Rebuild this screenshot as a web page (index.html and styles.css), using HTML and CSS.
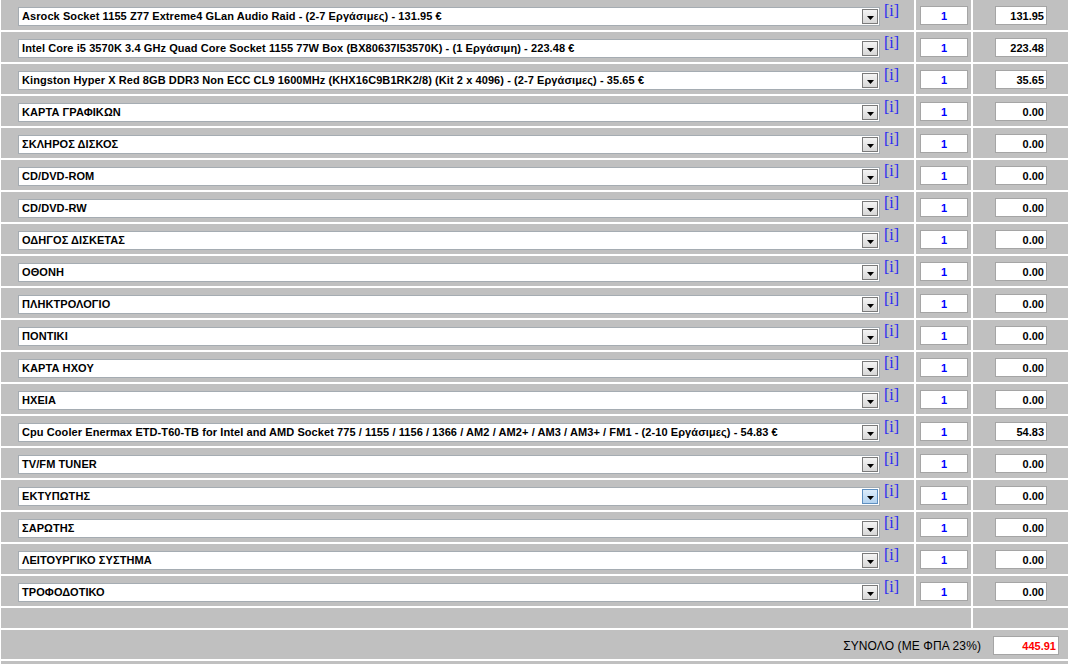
FILE: index.html
```html
<!DOCTYPE html>
<html lang="el">
<head>
    <meta charset="UTF-8">
    <title>Σύνθεση υπολογιστή</title>
    <link rel="stylesheet" href="styles.css">
</head>
<body>

    <table class="builder">
        <colgroup>
            <col class="col-item">
            <col class="col-qty">
            <col class="col-price">
        </colgroup>
        <tbody>
            <tr class="part">
                <td><div class="pick"><div class="combo"><span class="combo-text">Asrock Socket 1155 Z77 Extreme4 GLan Audio Raid - (2-7 Εργάσιμες) - 131.95 €</span><span class="combo-btn"><svg width="7" height="4" viewBox="0 0 7 4"><path d="M0 0h7L3.5 4z"/></svg></span></div><a href="#" class="info">[i]</a></div></td>
                <td><input class="qty" type="text" value="1"></td>
                <td><input class="price" type="text" value="131.95"></td>
            </tr>
            <tr class="part">
                <td><div class="pick"><div class="combo"><span class="combo-text">Intel Core i5 3570K 3.4 GHz Quad Core Socket 1155 77W Box (BX80637I53570K) - (1 Εργάσιμη) - 223.48 €</span><span class="combo-btn"><svg width="7" height="4" viewBox="0 0 7 4"><path d="M0 0h7L3.5 4z"/></svg></span></div><a href="#" class="info">[i]</a></div></td>
                <td><input class="qty" type="text" value="1"></td>
                <td><input class="price" type="text" value="223.48"></td>
            </tr>
            <tr class="part">
                <td><div class="pick"><div class="combo"><span class="combo-text">Kingston Hyper X Red 8GB DDR3 Non ECC CL9 1600MHz (KHX16C9B1RK2/8) (Kit 2 x 4096) - (2-7 Εργάσιμες) - 35.65 €</span><span class="combo-btn"><svg width="7" height="4" viewBox="0 0 7 4"><path d="M0 0h7L3.5 4z"/></svg></span></div><a href="#" class="info">[i]</a></div></td>
                <td><input class="qty" type="text" value="1"></td>
                <td><input class="price" type="text" value="35.65"></td>
            </tr>
            <tr class="part">
                <td><div class="pick"><div class="combo"><span class="combo-text">ΚΑΡΤΑ ΓΡΑΦΙΚΩΝ</span><span class="combo-btn"><svg width="7" height="4" viewBox="0 0 7 4"><path d="M0 0h7L3.5 4z"/></svg></span></div><a href="#" class="info">[i]</a></div></td>
                <td><input class="qty" type="text" value="1"></td>
                <td><input class="price" type="text" value="0.00"></td>
            </tr>
            <tr class="part">
                <td><div class="pick"><div class="combo"><span class="combo-text">ΣΚΛΗΡΟΣ ΔΙΣΚΟΣ</span><span class="combo-btn"><svg width="7" height="4" viewBox="0 0 7 4"><path d="M0 0h7L3.5 4z"/></svg></span></div><a href="#" class="info">[i]</a></div></td>
                <td><input class="qty" type="text" value="1"></td>
                <td><input class="price" type="text" value="0.00"></td>
            </tr>
            <tr class="part">
                <td><div class="pick"><div class="combo"><span class="combo-text">CD/DVD-ROM</span><span class="combo-btn"><svg width="7" height="4" viewBox="0 0 7 4"><path d="M0 0h7L3.5 4z"/></svg></span></div><a href="#" class="info">[i]</a></div></td>
                <td><input class="qty" type="text" value="1"></td>
                <td><input class="price" type="text" value="0.00"></td>
            </tr>
            <tr class="part">
                <td><div class="pick"><div class="combo"><span class="combo-text">CD/DVD-RW</span><span class="combo-btn"><svg width="7" height="4" viewBox="0 0 7 4"><path d="M0 0h7L3.5 4z"/></svg></span></div><a href="#" class="info">[i]</a></div></td>
                <td><input class="qty" type="text" value="1"></td>
                <td><input class="price" type="text" value="0.00"></td>
            </tr>
            <tr class="part">
                <td><div class="pick"><div class="combo"><span class="combo-text">ΟΔΗΓΟΣ ΔΙΣΚΕΤΑΣ</span><span class="combo-btn"><svg width="7" height="4" viewBox="0 0 7 4"><path d="M0 0h7L3.5 4z"/></svg></span></div><a href="#" class="info">[i]</a></div></td>
                <td><input class="qty" type="text" value="1"></td>
                <td><input class="price" type="text" value="0.00"></td>
            </tr>
            <tr class="part">
                <td><div class="pick"><div class="combo"><span class="combo-text">ΟΘΟΝΗ</span><span class="combo-btn"><svg width="7" height="4" viewBox="0 0 7 4"><path d="M0 0h7L3.5 4z"/></svg></span></div><a href="#" class="info">[i]</a></div></td>
                <td><input class="qty" type="text" value="1"></td>
                <td><input class="price" type="text" value="0.00"></td>
            </tr>
            <tr class="part">
                <td><div class="pick"><div class="combo"><span class="combo-text">ΠΛΗΚΤΡΟΛΟΓΙΟ</span><span class="combo-btn"><svg width="7" height="4" viewBox="0 0 7 4"><path d="M0 0h7L3.5 4z"/></svg></span></div><a href="#" class="info">[i]</a></div></td>
                <td><input class="qty" type="text" value="1"></td>
                <td><input class="price" type="text" value="0.00"></td>
            </tr>
            <tr class="part">
                <td><div class="pick"><div class="combo"><span class="combo-text">ΠΟΝΤΙΚΙ</span><span class="combo-btn"><svg width="7" height="4" viewBox="0 0 7 4"><path d="M0 0h7L3.5 4z"/></svg></span></div><a href="#" class="info">[i]</a></div></td>
                <td><input class="qty" type="text" value="1"></td>
                <td><input class="price" type="text" value="0.00"></td>
            </tr>
            <tr class="part">
                <td><div class="pick"><div class="combo"><span class="combo-text">ΚΑΡΤΑ ΗΧΟΥ</span><span class="combo-btn"><svg width="7" height="4" viewBox="0 0 7 4"><path d="M0 0h7L3.5 4z"/></svg></span></div><a href="#" class="info">[i]</a></div></td>
                <td><input class="qty" type="text" value="1"></td>
                <td><input class="price" type="text" value="0.00"></td>
            </tr>
            <tr class="part">
                <td><div class="pick"><div class="combo"><span class="combo-text">ΗΧΕΙΑ</span><span class="combo-btn"><svg width="7" height="4" viewBox="0 0 7 4"><path d="M0 0h7L3.5 4z"/></svg></span></div><a href="#" class="info">[i]</a></div></td>
                <td><input class="qty" type="text" value="1"></td>
                <td><input class="price" type="text" value="0.00"></td>
            </tr>
            <tr class="part">
                <td><div class="pick"><div class="combo"><span class="combo-text">Cpu Cooler Enermax ETD-T60-TB for Intel and AMD Socket 775 / 1155 / 1156 / 1366 / AM2 / AM2+ / AM3 / AM3+ / FM1 - (2-10 Εργάσιμες) - 54.83 €</span><span class="combo-btn"><svg width="7" height="4" viewBox="0 0 7 4"><path d="M0 0h7L3.5 4z"/></svg></span></div><a href="#" class="info">[i]</a></div></td>
                <td><input class="qty" type="text" value="1"></td>
                <td><input class="price" type="text" value="54.83"></td>
            </tr>
            <tr class="part">
                <td><div class="pick"><div class="combo"><span class="combo-text">TV/FM TUNER</span><span class="combo-btn"><svg width="7" height="4" viewBox="0 0 7 4"><path d="M0 0h7L3.5 4z"/></svg></span></div><a href="#" class="info">[i]</a></div></td>
                <td><input class="qty" type="text" value="1"></td>
                <td><input class="price" type="text" value="0.00"></td>
            </tr>
            <tr class="part">
                <td><div class="pick"><div class="combo hover"><span class="combo-text">ΕΚΤΥΠΩΤΗΣ</span><span class="combo-btn"><svg width="7" height="4" viewBox="0 0 7 4"><path d="M0 0h7L3.5 4z"/></svg></span></div><a href="#" class="info">[i]</a></div></td>
                <td><input class="qty" type="text" value="1"></td>
                <td><input class="price" type="text" value="0.00"></td>
            </tr>
            <tr class="part">
                <td><div class="pick"><div class="combo"><span class="combo-text">ΣΑΡΩΤΗΣ</span><span class="combo-btn"><svg width="7" height="4" viewBox="0 0 7 4"><path d="M0 0h7L3.5 4z"/></svg></span></div><a href="#" class="info">[i]</a></div></td>
                <td><input class="qty" type="text" value="1"></td>
                <td><input class="price" type="text" value="0.00"></td>
            </tr>
            <tr class="part">
                <td><div class="pick"><div class="combo"><span class="combo-text">ΛΕΙΤΟΥΡΓΙΚΟ ΣΥΣΤΗΜΑ</span><span class="combo-btn"><svg width="7" height="4" viewBox="0 0 7 4"><path d="M0 0h7L3.5 4z"/></svg></span></div><a href="#" class="info">[i]</a></div></td>
                <td><input class="qty" type="text" value="1"></td>
                <td><input class="price" type="text" value="0.00"></td>
            </tr>
            <tr class="part">
                <td><div class="pick"><div class="combo"><span class="combo-text">ΤΡΟΦΟΔΟΤΙΚΟ</span><span class="combo-btn"><svg width="7" height="4" viewBox="0 0 7 4"><path d="M0 0h7L3.5 4z"/></svg></span></div><a href="#" class="info">[i]</a></div></td>
                <td><input class="qty" type="text" value="1"></td>
                <td><input class="price" type="text" value="0.00"></td>
            </tr>

            <!-- spacer -->
            <tr class="gap">
                <td colspan="2"></td>
                <td></td>
            </tr>

            <!-- total -->
            <tr class="total">
                <td colspan="3">
                    <div class="total-line">
                        <span class="total-label">ΣΥΝΟΛΟ (ΜΕ ΦΠΑ 23%)</span>
                        <input class="total-sum" type="text" value="445.91">
                    </div>
                </td>
            </tr>
            <tr class="gap">
                <td colspan="3"></td>
            </tr>
        </tbody>
    </table>

</body>
</html>
```

FILE: styles.css
```css
/* General */
body {
    margin: 0;
    background: #fff;
    font-family: 'Liberation Sans', Arial, sans-serif;
    overflow: hidden;
}

.builder {
    width: 1071px;
    margin: -2px 0 0 -1px;
    border-collapse: separate;
    border-spacing: 2px;
    table-layout: fixed;
}

.col-item { width: 913px; }
.col-qty { width: 55px; }
.col-price { width: 95px; }

.builder td {
    background: #c0c0c0;
    padding: 0;
    vertical-align: top;
}

.part td {
    height: 30px;
}

.gap td {
    height: 20px;
}

/* Component picker */
.pick {
    display: flex;
    align-items: flex-start;
    padding-left: 17px;
}

.combo {
    display: flex;
    align-items: center;
    width: 860px;
    height: 17px;
    margin-top: 7px;
    background: #fff;
    border: 1px solid #a5acb2;
}

.combo-text {
    flex: 1;
    padding: 0 0 1px 3px;
    font-size: 11px;
    font-weight: bold;
    letter-spacing: 0.08px;
    color: #000;
    white-space: nowrap;
    overflow: hidden;
}

.combo-btn {
    display: flex;
    align-items: center;
    justify-content: center;
    width: 16px;
    height: 15px;
    margin-right: 1px;
    box-sizing: border-box;
    border: 1px solid #7a7a7a;
    background: linear-gradient(#f4f4f4, #d8d8d8);
    padding-top: 2px;
}

.combo.hover .combo-btn {
    border-color: #5e8fc0;
    background: linear-gradient(#dcecfa, #b3d3f0);
}

.combo-btn svg {
    display: block;
}

.info {
    margin: 2px 0 0 4px;
    font-family: 'Liberation Serif', 'Times New Roman', serif;
    font-size: 16px;
    line-height: 17px;
    color: #2a2af0;
    text-decoration: none;
}

/* Quantity and price boxes */
.qty,
.price,
.total-sum {
    box-sizing: border-box;
    height: 19px;
    padding: 0 2px;
    border: 1px solid #a5a5a5;
    background: #fff;
    font-family: 'Liberation Sans', Arial, sans-serif;
    font-size: 11px;
    font-weight: bold;
    outline: none;
}

.qty {
    display: block;
    width: 48px;
    margin: 6px 0 0 4px;
    text-align: center;
    color: #0000ff;
}

.price {
    display: block;
    width: 52px;
    margin: 6px 0 0 22px;
    text-align: right;
    color: #000;
}

/* Total */
.total td {
    height: 29px;
}

.total-line {
    display: flex;
    justify-content: flex-end;
    align-items: center;
    gap: 12px;
    padding: 6px 9px 0 0;
}

.total-label {
    font-size: 12px;
    letter-spacing: 0.1px;
    color: #000;
}

.total-sum {
    width: 66px;
    text-align: right;
    color: #ff0000;
}
```
